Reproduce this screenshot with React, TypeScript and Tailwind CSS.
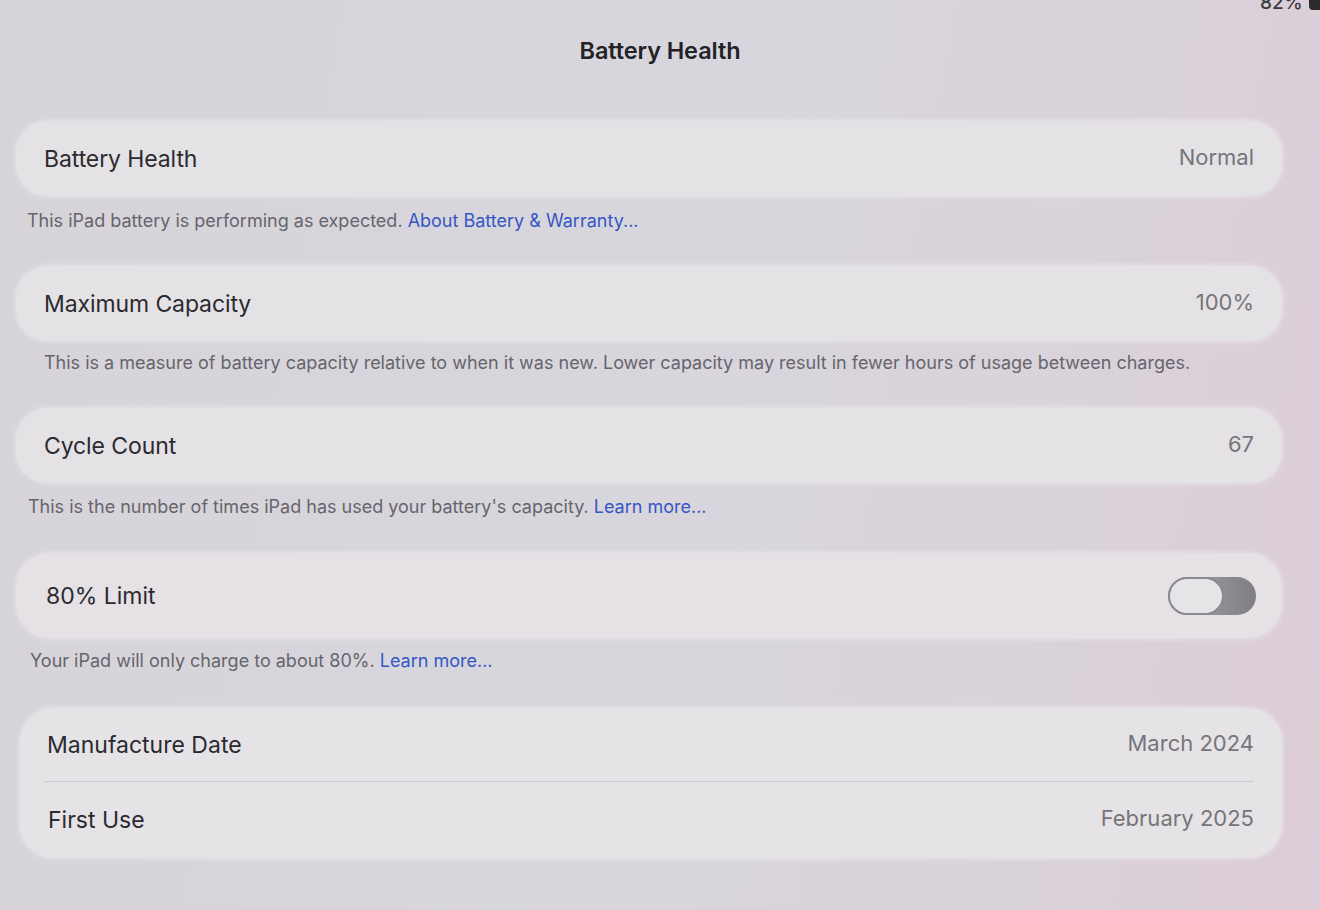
import React from 'react'

const font = { fontFamily: 'Inter, "Noto Sans", "Liberation Sans", sans-serif' }

type RowProps = {
  label: string
  value?: string
  children?: React.ReactNode
}

function Row({ label, value, children }: RowProps) {
  return (
    <div className="flex h-[75px] items-center justify-between pl-[28px] pr-[28px]">
      <span className="text-[23px] tracking-[-0.1px] text-[#2b2a30]">{label}</span>
      {value ? <span className="-mt-[3px] text-[22px] text-[#76757b]">{value}</span> : null}
      {children}
    </div>
  )
}

function Footer({ children, className = 'h-[70px] pt-[11px] pl-[11px]' }: { children: React.ReactNode; className?: string }) {
  return <p className={`text-[18px] text-[#66656c] ${className}`}>{children}</p>
}

function Link({ children }: { children: React.ReactNode }) {
  return <span className="text-[#3557c4]">{children}</span>
}

export default function App() {
  return (
    <div
      style={font}
      className="relative h-[910px] w-[1320px] overflow-hidden bg-[linear-gradient(100deg,#d6d3d9_0%,#d8d6dd_45%,#d9d3db_75%,#dcccd7_100%)]"
    >
      <div className="absolute -top-[11px] left-[1260px] flex items-center gap-[6px] text-[19px] font-medium text-[#3a3a3e]">
        <span>82%</span>
        <span className="h-[14px] w-[26px] rounded-[4px] bg-[#2a2a2e]" />
      </div>

      <h1 className="pt-[33px] text-center text-[23.5px] font-semibold tracking-[-0.1px] text-[#232227]">
        Battery Health
      </h1>

      <div className="mt-[53px] pl-[16px] pr-[38px]">
        <div className="rounded-[32px] bg-[#e4e2e5] shadow-[0_0_6px_rgba(255,255,255,0.5)]">
          <Row label="Battery Health" value="Normal" />
        </div>
        <Footer>
          This iPad battery is performing as expected. <Link>About Battery &amp; Warranty...</Link>
        </Footer>

        <div className="rounded-[32px] bg-[#e4e2e5] shadow-[0_0_6px_rgba(255,255,255,0.5)]">
          <Row label="Maximum Capacity" value="100%" />
        </div>
        <Footer className="h-[67px] pt-[8px] pl-[28px]">
          This is a measure of battery capacity relative to when it was new. Lower capacity may result in fewer hours of usage between charges.
        </Footer>

        <div className="rounded-[32px] bg-[#e4e2e5] shadow-[0_0_6px_rgba(255,255,255,0.5)]">
          <Row label="Cycle Count" value="67" />
        </div>
        <Footer className="h-[70px] pt-[10px] pl-[12px]">
          This is the number of times iPad has used your battery&apos;s capacity. <Link>Learn more...</Link>
        </Footer>

        <div className="rounded-[34px] bg-[#e5e1e5] shadow-[0_0_6px_rgba(255,255,255,0.5)]">
          <div className="flex h-[85px] items-center justify-between pl-[30px] pr-[26px]">
            <span className="text-[23px] text-[#2b2a30]">80% Limit</span>
            <div className="relative h-[38px] w-[88px] rounded-full bg-[linear-gradient(90deg,#a9a7ac,#7f7e84)]">
              <div className="absolute left-0 top-0 h-[38px] w-[56px] rounded-full border-2 border-[#8a898e] bg-[#e7e4e7]" />
            </div>
          </div>
        </div>
        <Footer className="h-[70px] pt-[9px] pl-[14px]">
          Your iPad will only charge to about 80%. <Link>Learn more...</Link>
        </Footer>

        <div className="ml-[4px] rounded-[34px] bg-[#e5e3e6] shadow-[0_0_6px_rgba(255,255,255,0.5)]">
          <div className="flex h-[73px] items-center justify-between pl-[27px] pr-[28px]">
            <span className="text-[23px] text-[#2b2a30]">Manufacture Date</span>
            <span className="-mt-[3px] text-[22px] text-[#76757b]">March 2024</span>
          </div>
          <div className="ml-[24px] mr-[28px] h-px bg-[#cbc9cd]" />
          <div className="flex h-[76px] items-center justify-between pl-[28px] pr-[28px]">
            <span className="text-[23px] text-[#2b2a30]">First Use</span>
            <span className="-mt-[3px] text-[22px] text-[#76757b]">February 2025</span>
          </div>
        </div>
      </div>
    </div>
  )
}
